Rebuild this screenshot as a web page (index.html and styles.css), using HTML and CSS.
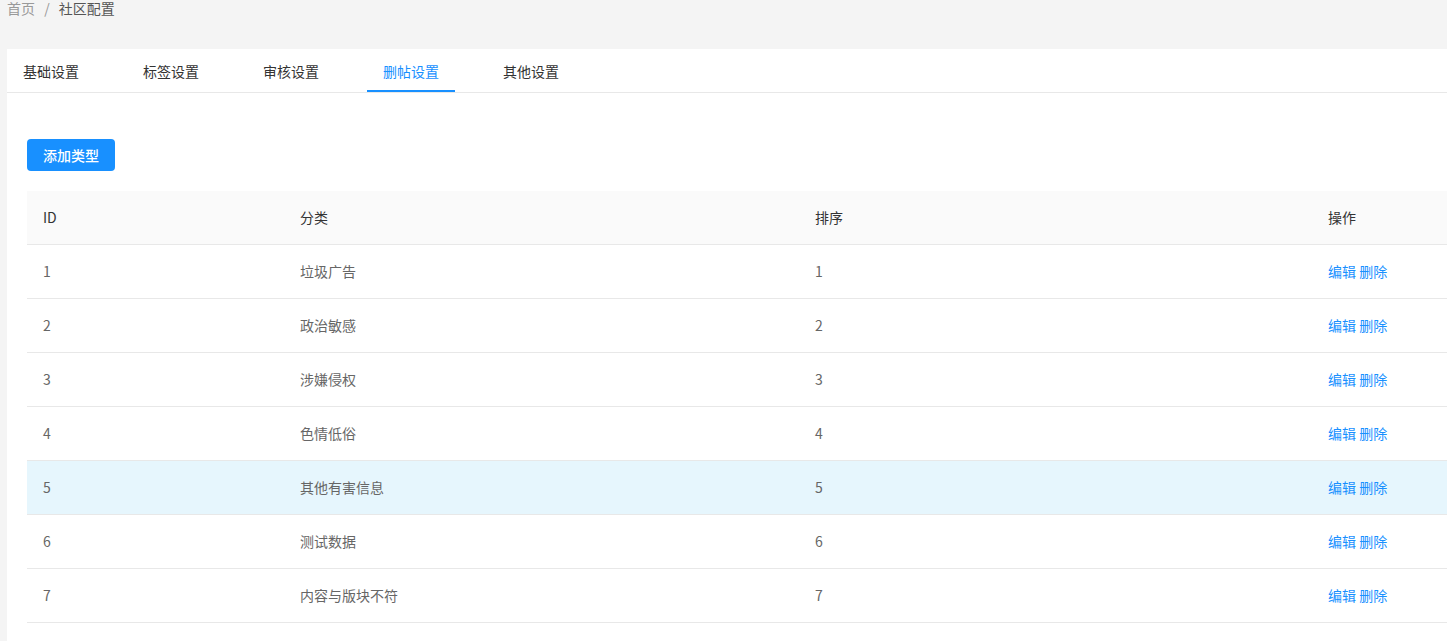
FILE: index.html
```html
<!DOCTYPE html>
<html lang="zh-CN">
<head>
  <meta charset="UTF-8" />
  <meta name="viewport" content="width=device-width, initial-scale=1.0" />
  <title>社区配置</title>
  <link rel="stylesheet" href="styles.css">
</head>
<body>
  <div class="breadcrumb">
    <span class="crumb">首页</span>
    <span class="sep">/</span>
    <span class="crumb current">社区配置</span>
  </div>

  <div class="card">
    <div class="tabs">
      <div class="tab">基础设置</div>
      <div class="tab">标签设置</div>
      <div class="tab">审核设置</div>
      <div class="tab active">删帖设置</div>
      <div class="tab">其他设置</div>
    </div>

    <div class="panel">
      <button class="btn-primary">添加类型</button>

      <table class="list">
        <colgroup>
          <col class="c-id">
          <col class="c-name">
          <col class="c-sort">
          <col class="c-op">
        </colgroup>
        <thead>
          <tr><th>ID</th><th>分类</th><th>排序</th><th>操作</th></tr>
        </thead>
        <tbody>
          <tr><td>1</td><td>垃圾广告</td><td>1</td><td><a>编辑</a> <a>删除</a></td></tr>
          <tr><td>2</td><td>政治敏感</td><td>2</td><td><a>编辑</a> <a>删除</a></td></tr>
          <tr><td>3</td><td>涉嫌侵权</td><td>3</td><td><a>编辑</a> <a>删除</a></td></tr>
          <tr><td>4</td><td>色情低俗</td><td>4</td><td><a>编辑</a> <a>删除</a></td></tr>
          <tr class="hover"><td>5</td><td>其他有害信息</td><td>5</td><td><a>编辑</a> <a>删除</a></td></tr>
          <tr><td>6</td><td>测试数据</td><td>6</td><td><a>编辑</a> <a>删除</a></td></tr>
          <tr><td>7</td><td>内容与版块不符</td><td>7</td><td><a>编辑</a> <a>删除</a></td></tr>
        </tbody>
      </table>
    </div>
  </div>
</body>
</html>
```

FILE: styles.css
```css
body {
  margin: 0;
  overflow: hidden;
  background: #f4f4f4;
  font-family: "Noto Sans CJK SC", "Liberation Sans", sans-serif;
  font-size: 14px;
  color: #333;
}
.breadcrumb {
  height: 18px;
  line-height: 16px;
  padding-left: 7px;
  font-size: 14px;
  color: #999;
}
.breadcrumb .sep {
  margin: 0 6px;
}
.breadcrumb .current {
  color: #555;
}
/* the card runs past the window on the right, as in the original */
.card {
  margin: 31px 0 0 7px;
  min-height: 620px;
  background: #fff;
  overflow: hidden;
}
.tabs {
  display: flex;
  gap: 32px;
  height: 43px;
  border-bottom: 1px solid #e8e8e8;
}
.tab {
  padding: 0 16px;
  line-height: 44px;
  height: 43px;
  color: #333;
  cursor: pointer;
  box-sizing: border-box;
  white-space: nowrap;
}
.tab.active {
  color: #1890ff;
  border-bottom: 2px solid #1890ff;
}
.panel {
  padding: 46px 0 0 20px;
}
.btn-primary {
  display: block;
  width: 88px;
  height: 32px;
  padding: 0 0 1px;
  border: none;
  border-radius: 4px;
  background: #1890ff;
  color: #fff;
  font-family: inherit;
  font-size: 14px;
  font-weight: 500;
  cursor: pointer;
}
.list {
  margin-top: 20px;
  border-collapse: collapse;
  table-layout: fixed;
  width: 1542px;
}
.c-id { width: 257px; }
.c-name { width: 515px; }
.c-sort { width: 513px; }
.c-op { width: 257px; }
.list th,
.list td {
  height: 51px;
  padding: 0 16px 2px;
  text-align: left;
  border-bottom: 1px solid #e8e8e8;
}
.list th {
  background: #fafafa;
  font-weight: normal;
  color: #333;
}
.list td {
  color: #666;
}
.list tr.hover td {
  background: #e6f6fd;
}
.list a {
  color: #1890ff;
  cursor: pointer;
}
```
